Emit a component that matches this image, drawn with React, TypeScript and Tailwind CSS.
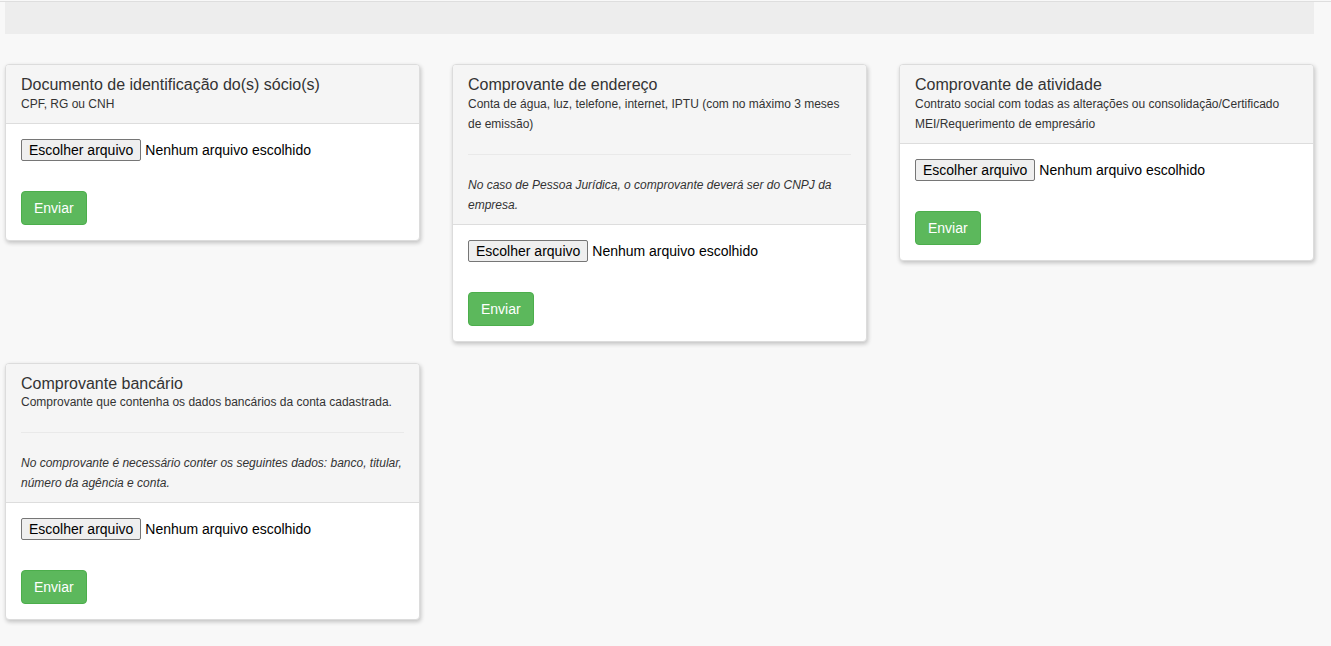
import React from "react";

type Card = {
  title: string;
  subtitle: string;
  note?: string;
};

const cards: Card[] = [
  { title: "Documento de identificação do(s) sócio(s)", subtitle: "CPF, RG ou CNH" },
  {
    title: "Comprovante de endereço",
    subtitle: "Conta de água, luz, telefone, internet, IPTU (com no máximo 3 meses de emissão)",
    note: "No caso de Pessoa Jurídica, o comprovante deverá ser do CNPJ da empresa.",
  },
  {
    title: "Comprovante de atividade",
    subtitle: "Contrato social com todas as alterações ou consolidação/Certificado MEI/Requerimento de empresário",
  },
  {
    title: "Comprovante bancário",
    subtitle: "Comprovante que contenha os dados bancários da conta cadastrada.",
    note: "No comprovante é necessário conter os seguintes dados: banco, titular, número da agência e conta.",
  },
];

function UploadCard({ card }: { card: Card }) {
  return (
    <div className="border border-[#dcdcdc] rounded-[4px] bg-white shadow-[1px_2px_4px_rgba(0,0,0,0.22)] overflow-hidden">
      <div className="bg-[#f5f5f5] border-b border-[#dddddd] px-[15px] pt-[11px] pb-[9px] text-[#333]">
        <div className="text-[16px] leading-[1.1]">{card.title}</div>
        <div className="text-[12px] leading-[20px]">{card.subtitle}</div>
        {card.note && (
          <>
            <div className="my-[20px] border-t border-[#e9e9e9]" />
            <div className="text-[12px] leading-[20px] italic">{card.note}</div>
          </>
        )}
      </div>
      <div className="px-[15px] py-[15px]">
        <div className="flex items-center h-[22px] text-[14px] text-black">
          <span className="inline-flex items-center h-[22px] px-[7px] border border-[#767676] rounded-[2px] bg-[#efefef] leading-[16px]">
            Escolher arquivo
          </span>
          <span className="ml-[4px] leading-[16px]">Nenhum arquivo escolhido</span>
        </div>
        <button
          type="button"
          className="mt-[30px] block px-[12px] py-[6px] text-[14px] leading-[20px] text-white bg-[#5cb85c] border border-[#4cae4c] rounded-[4px]"
        >
          Enviar
        </button>
      </div>
    </div>
  );
}

export default function App() {
  return (
    <div
      className="min-h-screen bg-[#f8f8f8] pt-px"
      style={{ fontFamily: '"Liberation Sans", Arial, sans-serif' }}
    >
      <div className="h-px bg-[#dedede]" />
      <div className="pl-[5px] pr-[17px]">
        <div className="h-[32px] bg-[#ededed]" />
        <div className="mt-[30px] grid grid-cols-3 gap-x-[32px] gap-y-[21px] items-start">
          {cards.map((c) => (
            <UploadCard key={c.title} card={c} />
          ))}
        </div>
      </div>
    </div>
  );
}
